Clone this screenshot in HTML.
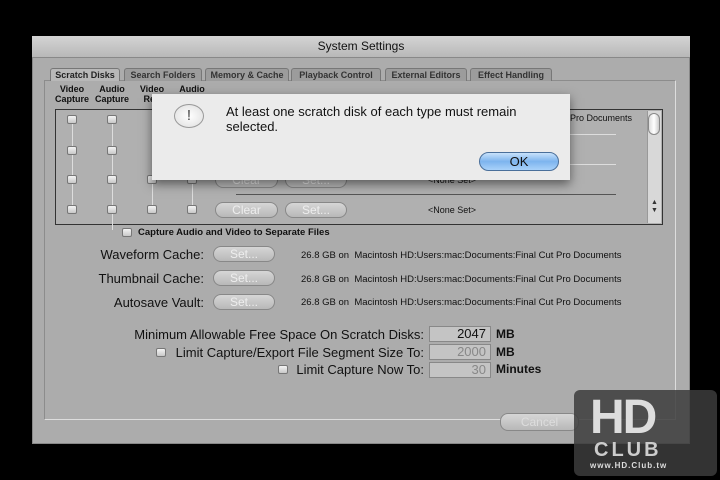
<!DOCTYPE html>
<html><head><meta charset="utf-8"><style>
*{margin:0;padding:0;box-sizing:border-box}
body{width:720px;height:480px;background:#000;position:relative;overflow:hidden;font-family:"Liberation Sans",sans-serif;color:#111}
.a{position:absolute;white-space:nowrap}
.win{left:32px;top:36px;width:658px;height:408px;background:#acacac;border:1px solid #888}
.title{left:32px;top:36px;width:658px;height:22px;background:linear-gradient(#d4d4d4,#b8b8b8);border-bottom:1px solid #888;text-align:center;font-size:12px;line-height:21px}
.panel{left:44px;top:80px;width:632px;height:340px;border:1px solid #8c8c8c;border-right-color:#ddd;border-bottom-color:#ddd}
.tab{top:68px;height:13px;font-size:9px;font-weight:bold;line-height:13px;background:#9c9c9c;color:#333;border:1px solid #777;border-bottom:none;border-radius:3px 3px 0 0;text-align:center}
.tab.sel{background:#b8b8b8;color:#222}
.hdr{font-size:9px;font-weight:bold;text-align:center;line-height:10px}
.list{left:55px;top:109px;width:608px;height:116px;border:1px solid #333;background:#b0b0b0}
.cb{width:10px;height:9px;border:1px solid #777;border-radius:2px;background:linear-gradient(#f4f4f4,#c8c8c8)}
.vl{width:1px;background:#ddd}
.btn{height:16px;border:1px solid #888;border-radius:8px;background:linear-gradient(#d6d6d6,#b8b8b8);color:#eee;font-size:12px;text-align:center;line-height:14px}
.lbl{font-size:13px;text-align:right}
.small{font-size:9.5px}
.fld{height:16px;border:1px solid #888;background:#c4c4c4;font-size:13px;text-align:right;padding-right:4px;line-height:14px;color:#888}
.sheet{left:152px;top:94px;width:418px;height:86px;background:#ebebeb;box-shadow:0 4px 10px rgba(0,0,0,.5)}
</style></head><body>
<div class="a win"></div>
<div class="a title">System Settings</div>
<div class="a panel"></div>
<div class="a tab sel" style="left:50px;width:70px">Scratch Disks</div>
<div class="a tab" style="left:124px;width:78px">Search Folders</div>
<div class="a tab" style="left:205px;width:84px">Memory &amp; Cache</div>
<div class="a tab" style="left:291px;width:90px">Playback Control</div>
<div class="a tab" style="left:385px;width:82px">External Editors</div>
<div class="a tab" style="left:470px;width:82px">Effect Handling</div>
<div class="a hdr" style="left:50px;top:84px;width:44px">Video<br>Capture</div>
<div class="a hdr" style="left:90px;top:84px;width:44px">Audio<br>Capture</div>
<div class="a hdr" style="left:134px;top:84px;width:36px">Video<br>Ren</div>
<div class="a hdr" style="left:172px;top:84px;width:40px">Audio</div>
<div class="a list"></div>
<div class="a vl" style="left:72px;top:120px;height:94px"></div>
<div class="a vl" style="left:112px;top:120px;height:110px"></div>
<div class="a vl" style="left:152px;top:120px;height:94px"></div>
<div class="a vl" style="left:192px;top:120px;height:94px"></div>
<div class="a cb" style="left:67px;top:115px"></div><div class="a cb" style="left:107px;top:115px"></div>
<div class="a cb" style="left:67px;top:146px"></div><div class="a cb" style="left:107px;top:146px"></div>
<div class="a cb" style="left:67px;top:175px"></div><div class="a cb" style="left:107px;top:175px"></div><div class="a cb" style="left:147px;top:175px"></div><div class="a cb" style="left:187px;top:175px"></div>
<div class="a cb" style="left:67px;top:205px"></div><div class="a cb" style="left:107px;top:205px"></div><div class="a cb" style="left:147px;top:205px"></div><div class="a cb" style="left:187px;top:205px"></div>
<div class="a btn" style="left:215px;top:172px;width:63px">Clear</div><div class="a btn" style="left:285px;top:172px;width:62px">Set...</div>
<div class="a btn" style="left:215px;top:202px;width:63px">Clear</div><div class="a btn" style="left:285px;top:202px;width:62px">Set...</div>
<div class="a" style="left:236px;top:134px;width:380px;height:1px;background:#ddd"></div>
<div class="a" style="left:236px;top:164px;width:380px;height:1px;background:#ddd"></div>
<div class="a" style="left:236px;top:194px;width:380px;height:1px;background:#555"></div>
<div class="a small" style="left:570px;top:113px;font-size:9px">Pro Documents</div>
<div class="a small" style="left:428px;top:175px;font-size:9px">&lt;None Set&gt;</div>
<div class="a small" style="left:428px;top:205px;font-size:9px">&lt;None Set&gt;</div>
<div class="a" style="left:647px;top:111px;width:14px;height:112px;background:#d8d8d8;border-left:1px solid #999"></div>
<div class="a" style="left:648px;top:113px;width:12px;height:22px;border-radius:6px;background:linear-gradient(90deg,#ddd,#fff,#ccc);border:1px solid #888"></div>
<div class="a" style="left:651px;top:199px;font-size:7px;color:#333;line-height:8px">▲<br>▼</div>
<div class="a cb" style="left:122px;top:228px"></div>
<div class="a" style="left:138px;top:227px;font-size:9.5px;font-weight:bold">Capture Audio and Video to Separate Files</div>
<div class="a lbl" style="left:60px;top:247px;width:144px">Waveform Cache:</div>
<div class="a lbl" style="left:60px;top:271px;width:144px">Thumbnail Cache:</div>
<div class="a lbl" style="left:60px;top:295px;width:144px">Autosave Vault:</div>
<div class="a btn" style="left:213px;top:246px;width:62px">Set...</div>
<div class="a btn" style="left:213px;top:270px;width:62px">Set...</div>
<div class="a btn" style="left:213px;top:294px;width:62px">Set...</div>
<div class="a small" style="left:301px;top:250px">26.8 GB on &nbsp;Macintosh HD:Users:mac:Documents:Final Cut Pro Documents</div>
<div class="a small" style="left:301px;top:274px">26.8 GB on &nbsp;Macintosh HD:Users:mac:Documents:Final Cut Pro Documents</div>
<div class="a small" style="left:301px;top:297px">26.8 GB on &nbsp;Macintosh HD:Users:mac:Documents:Final Cut Pro Documents</div>
<div class="a lbl" style="left:100px;top:327px;width:324px">Minimum Allowable Free Space On Scratch Disks:</div>
<div class="a lbl" style="left:100px;top:345px;width:324px">Limit Capture/Export File Segment Size To:</div>
<div class="a lbl" style="left:200px;top:362px;width:224px">Limit Capture Now To:</div>
<div class="a cb" style="left:156px;top:348px"></div>
<div class="a cb" style="left:278px;top:365px"></div>
<div class="a fld" style="left:429px;top:326px;width:62px;color:#111">2047</div>
<div class="a fld" style="left:429px;top:344px;width:62px">2000</div>
<div class="a fld" style="left:429px;top:362px;width:62px">30</div>
<div class="a" style="left:496px;top:327px;font-size:12px;font-weight:bold">MB</div>
<div class="a" style="left:496px;top:345px;font-size:12px;font-weight:bold">MB</div>
<div class="a" style="left:496px;top:362px;font-size:12px;font-weight:bold">Minutes</div>
<div class="a btn" style="left:500px;top:413px;width:79px;height:18px;line-height:16px;font-size:12px;color:#ddd">Cancel</div>
<div class="a sheet"></div>
<div class="a" style="left:174px;top:104px;width:30px;height:24px;border-radius:50%;background:radial-gradient(#fff,#ddd);border:1px solid #999;text-align:center;font-size:15px;line-height:22px;color:#444">!</div>
<div class="a" style="left:226px;top:104px;font-size:13px;line-height:15px">At least one scratch disk of each type must remain<br>selected.</div>
<div class="a" style="left:479px;top:152px;width:80px;height:19px;border-radius:10px;border:1px solid #4a6f9a;background:linear-gradient(#c8e2fb,#7db4ee 50%,#a9d2fa);text-align:center;font-size:13px;line-height:17px">OK</div>
<div class="a" style="left:574px;top:390px;width:143px;height:86px;background:rgba(60,60,60,.85);border-radius:6px"></div>
<div class="a" style="left:590px;top:396px;font-size:48px;font-weight:bold;color:#ddd;letter-spacing:-2px;line-height:44px">HD</div>
<div class="a" style="left:594px;top:440px;font-size:20px;font-weight:bold;color:#ccc;letter-spacing:3px;line-height:20px">CLUB</div>
<div class="a" style="left:590px;top:461px;font-size:8px;font-weight:bold;color:#ddd;letter-spacing:1px">www.HD.Club.tw</div>
</body></html>
